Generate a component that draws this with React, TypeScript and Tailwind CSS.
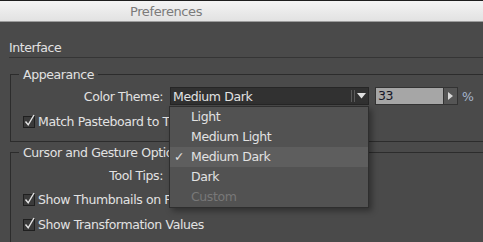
import React from "react";

function Check() {
  return (
    <span className="relative w-[12px] h-[12px] shrink-0 bg-[#3a3a3a] border border-[#1f1f1f]">
      <svg width="12" height="13" viewBox="0 0 12 13" className="absolute left-[0px] top-[-3px] overflow-visible">
        <path d="M1.5 7.5 L4.2 10.8 L10 1" fill="none" stroke="#e4e4e4" strokeWidth="1.4" />
      </svg>
    </span>
  );
}

function CheckRow({ label, className }: { label: string; className: string }) {
  return (
    <div className={"flex items-center h-[15px] pl-[12px] gap-[3px] whitespace-nowrap " + className}>
      <Check />
      <span>{label}</span>
    </div>
  );
}

export default function App() {
  const items = ["Light", "Medium Light", "Medium Dark", "Dark", "Custom"];
  return (
    <div className="relative w-[483px] h-[242px] overflow-hidden bg-[#4a4a4a] text-[12.5px] leading-[15px] text-[#e2e2e2] font-['DejaVu_Sans',sans-serif] tracking-[-0.4px]">
      <div className="h-px bg-[#1e1e1e]" />
      <div className="h-[21px] bg-gradient-to-b from-[#f4f4f4] to-[#e2e2e2] border-b border-[#9c9c9c] pl-[130px] text-[13px] leading-[22px] text-[#7b7b7b] tracking-[-0.4px]">
        Preferences
      </div>
      <div className="pl-[9px] pt-[18px]">Interface</div>
      <div className="ml-[9px] mt-[2px] border-t border-[#353535]" />

      <fieldset className="ml-[10px] mt-[9px] w-[600px] h-[75px] border border-[#2c2c2c]">
        <legend className="ml-[8px] px-[4px] leading-[15px]">Appearance</legend>
        <div className="flex items-center h-[18px] mt-[5px]">
          <div className="w-[152px] text-right whitespace-nowrap">Color Theme:</div>
          <div className="ml-[7px] w-[199px] h-[18px] bg-[#313131] border border-[#262626] flex items-center pl-[2px]">
            <span className="flex-1">Medium Dark</span>
            <span className="w-px h-[12px] bg-[#5a5a5a]" />
            <span className="w-px h-[12px] bg-[#5a5a5a] ml-[2px]" />
            <svg width="9" height="6" viewBox="0 0 9 6" className="ml-[2px] mr-[2px]">
              <path d="M0 0 H9 L4.5 5.5 Z" fill="#e0e0e0" />
            </svg>
          </div>
          <div className="ml-[6px] w-[69px] h-[18px] bg-[#a6a6a6] border border-[#333] text-[#151525] pl-[2px] leading-[16px]">33</div>
          <div className="w-[14px] h-[18px] bg-[#555] border border-l-0 border-[#333] flex items-center justify-center">
            <svg width="5" height="8" viewBox="0 0 5 8">
              <path d="M0 0 L5 4 L0 8 Z" fill="#d8d8d8" />
            </svg>
          </div>
          <span className="ml-[4px] text-[#a6b6cc]">%</span>
        </div>
        <CheckRow label="Match Pasteboard to Theme Color" className="mt-[9px]" />
      </fieldset>

      <fieldset className="ml-[10px] mt-[3px] w-[600px] h-[120px] border border-[#2c2c2c]">
        <legend className="ml-[8px] px-[4px] leading-[15px]">Cursor and Gesture Options</legend>
        <div className="flex items-center h-[18px] mt-[6px]">
          <div className="w-[152px] text-right whitespace-nowrap">Tool Tips:</div>
        </div>
        <CheckRow label="Show Thumbnails on Place" className="mt-[8px]" />
        <CheckRow label="Show Transformation Values" className="mt-[10px]" />
      </fieldset>

      <div className="absolute left-[169px] top-[106px] w-[200px] bg-[#525252] border border-[#2e2e2e] shadow-[3px_3px_6px_rgba(0,0,0,0.35)]">
        {items.map((it) => (
          <div
            key={it}
            className={
              "relative h-[20px] leading-[20px] pl-[21px] " +
              (it === "Medium Dark" ? "bg-[#5e5e5e]" : "") +
              (it === "Custom" ? " text-[#787878]" : "")
            }
          >
            {it === "Medium Dark" && (
              <span className="absolute left-[4px] top-0">✓</span>
            )}
            {it}
          </div>
        ))}
      </div>
    </div>
  );
}
